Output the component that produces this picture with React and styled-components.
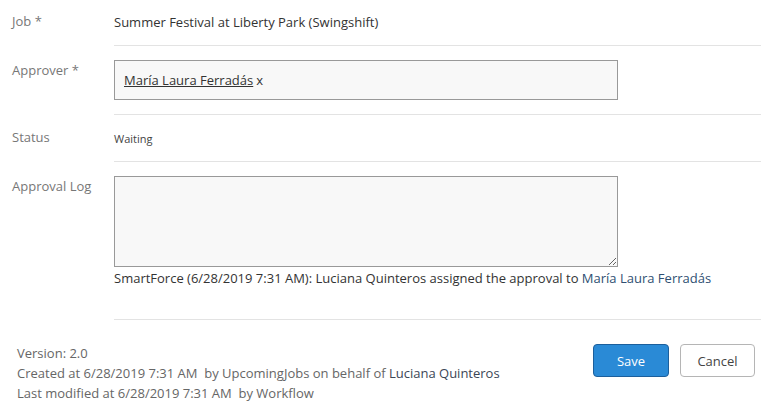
import React from 'react';
import styled, { createGlobalStyle } from 'styled-components';

const GlobalStyle = createGlobalStyle`
  body {
    margin: 0;
    background: #ffffff;
    font-family: "Open Sans", "Liberation Sans", sans-serif;
    font-size: 13px;
    color: #333;
  }
`;

const Page = styled.div`
  width: 783px;
  height: 418px;
  overflow: hidden;
`;

const Form = styled.div`
  padding-right: 22px;
`;

const Row = styled.div`
  display: grid;
  grid-template-columns: 114px 1fr;
`;

const Label = styled.div`
  padding: ${(p) => p.$top || 14}px 0 0 12px;
  line-height: 18px;
  color: #777;
`;

const Field = styled.div`
  padding: 14px 0 ${(p) => p.$bottom || 14}px;
  border-bottom: 1px solid #e3e3e3;
  line-height: 17px;
  min-width: 0;
`;

const Value = styled.div`
  color: ${(p) => (p.$muted ? '#444' : '#333')};
  font-size: ${(p) => (p.$small ? '11px' : '13px')};
  line-height: ${(p) => (p.$small ? '16px' : '17px')};
  padding-top: ${(p) => (p.$small ? '2px' : '0')};
  white-space: nowrap;
`;

const PickerBox = styled.div`
  box-sizing: border-box;
  width: 504px;
  height: 40px;
  border: 1px solid #999;
  background: #f8f8f8;
  display: flex;
  align-items: center;
  padding: 1px 9px 0;
  color: #333;
`;

const PersonLink = styled.a`
  color: #333;
  text-decoration: underline;
  cursor: pointer;
`;

const Remove = styled.span`
  margin-left: 3px;
  color: #333;
  cursor: pointer;
`;

const LogArea = styled.textarea`
  display: block;
  box-sizing: border-box;
  width: 504px;
  height: 91px;
  margin: 0;
  border: 1px solid #999;
  border-radius: 0;
  background: #f8f8f8;
  font-family: inherit;
  font-size: 13px;
  outline: none;
`;

const LogLine = styled.div`
  margin-top: 3px;
  color: #333;
  white-space: nowrap;
`;

const BlueName = styled.span`
  color: #2f4f72;
`;

const Footer = styled.div`
  display: flex;
  justify-content: space-between;
  align-items: flex-start;
  padding: 24px 28px 0 17px;
`;

const Meta = styled.div`
  line-height: 20px;
  margin-top: -1px;
  color: #666;
  white-space: nowrap;
`;

const MetaName = styled.span`
  color: #3c4656;
`;

const Actions = styled.div`
  display: flex;
  gap: 11px;
`;

const Button = styled.button`
  box-sizing: border-box;
  width: ${(p) => p.$width}px;
  height: 33px;
  border-radius: 4px;
  font-family: inherit;
  font-size: 13px;
  cursor: pointer;
  border: 1px solid ${(p) => (p.$primary ? '#1c5f9c' : '#b5b5b5')};
  background: ${(p) => (p.$primary ? '#2a8ad6' : '#ffffff')};
  color: ${(p) => (p.$primary ? '#ffffff' : '#444')};
`;

export default function App() {
  return (
    <Page>
      <GlobalStyle />
      <Form>
        <Row>
          <Label $top={12}>Job *</Label>
          <Field>
            <Value>Summer Festival at Liberty Park (Swingshift)</Value>
          </Field>
        </Row>
        <Row>
          <Label $top={15}>Approver *</Label>
          <Field>
            <PickerBox>
              <PersonLink>María Laura Ferradás</PersonLink>
              <Remove>x</Remove>
            </PickerBox>
          </Field>
        </Row>
        <Row>
          <Label $top={13}>Status</Label>
          <Field>
            <Value $small $muted>Waiting</Value>
          </Field>
        </Row>
        <Row>
          <Label $top={15}>Approval Log</Label>
          <Field $bottom={32}>
            <LogArea defaultValue="" />
            <LogLine>
              SmartForce (6/28/2019 7:31 AM): Luciana Quinteros assigned the approval to{' '}
              <BlueName>María Laura Ferradás</BlueName>
            </LogLine>
          </Field>
        </Row>
      </Form>
      <Footer>
        <Meta>
          <div>Version: 2.0</div>
          <div>
            Created at 6/28/2019 7:31 AM&nbsp; by UpcomingJobs on behalf of{' '}
            <MetaName>Luciana Quinteros</MetaName>
          </div>
          <div>Last modified at 6/28/2019 7:31 AM&nbsp; by Workflow</div>
        </Meta>
        <Actions>
          <Button $primary $width={76}>Save</Button>
          <Button $width={75}>Cancel</Button>
        </Actions>
      </Footer>
    </Page>
  );
}
